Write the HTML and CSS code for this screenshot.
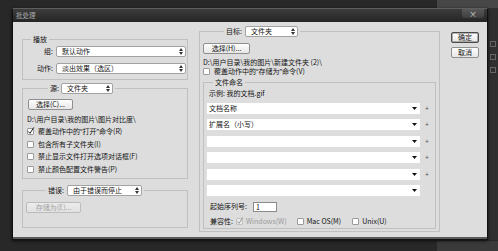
FILE: index.html
```html
<!DOCTYPE html>
<html lang="zh-CN">
<head>
<meta charset="utf-8">
<title>批处理</title>
<link rel="stylesheet" href="styles.css">
</head>
<body>
<div class="screen">
  <div class="patch patch-top"></div>
  <div class="patch patch-bottom"></div>
  <div class="dialog">
    <div class="titlebar">
      <span class="title">批处理</span>
      <span class="close">×</span>
    </div>
    <div class="content">
      <div class="col-left">
        <fieldset class="box box-play">
          <legend class="legend-text">播放</legend>
          <div class="form-row">
            <span class="label">组:</span>
            <div class="select"><span>默认动作</span><svg class="updown" width="4" height="7" viewBox="0 0 4 7"><path d="M0 3L2 0L4 3Z M0 4L2 7L4 4Z"/></svg></div>
          </div>
          <div class="form-row">
            <span class="label">动作:</span>
            <div class="select"><span>淡出效果（选区）</span><svg class="updown" width="4" height="7" viewBox="0 0 4 7"><path d="M0 3L2 0L4 3Z M0 4L2 7L4 4Z"/></svg></div>
          </div>
        </fieldset>

        <fieldset class="box box-src">
          <legend class="legend-ctrl"><span class="legend-label label-src">源:</span><div class="select select-src"><span>文件夹</span><svg class="updown" width="4" height="7" viewBox="0 0 4 7"><path d="M0 3L2 0L4 3Z M0 4L2 7L4 4Z"/></svg></div></legend>
          <div class="btn btn-c">选择(C)...</div>
          <div class="path path-left">D:\用户目录\我的图片\图片对比度\</div>
          <div class="check-row"><span class="checkbox"><svg width="7" height="7" viewBox="0 0 7 7"><path d="M1.2 3.4L3 5.4L6.8 -0.6" fill="none" stroke="#222" stroke-width="1"/></svg></span>覆盖动作中的<span class="q">“</span>打开<span class="q">”</span>命令(R)</div>
          <div class="check-row"><span class="checkbox"></span>包含所有子文件夹(I)</div>
          <div class="check-row"><span class="checkbox"></span>禁止显示文件打开选项对话框(F)</div>
          <div class="check-row"><span class="checkbox"></span>禁止颜色配置文件警告(P)</div>
        </fieldset>

        <fieldset class="box box-err">
          <legend class="legend-ctrl"><span class="legend-label">错误:</span><div class="select select-err"><span>由于错误而停止</span><svg class="updown" width="4" height="7" viewBox="0 0 4 7"><path d="M0 3L2 0L4 3Z M0 4L2 7L4 4Z"/></svg></div></legend>
          <div class="btn btn-disabled">存储为(E)...</div>
        </fieldset>
      </div>

      <fieldset class="box box-dest">
        <legend class="legend-ctrl"><span class="legend-label">目标:</span><div class="select select-dest"><span>文件夹</span><svg class="updown" width="4" height="7" viewBox="0 0 4 7"><path d="M0 3L2 0L4 3Z M0 4L2 7L4 4Z"/></svg></div></legend>
        <div class="btn btn-h">选择(H)...</div>
        <div class="path path-dest">D:\用户目录\我的图片\新建文件夹 (2)\</div>
        <div class="check-row check-row-dest"><span class="checkbox"></span>覆盖动作中的<span class="q">“</span>存储为<span class="q">”</span>命令(V)</div>

        <fieldset class="box box-naming">
          <legend class="legend-text">文件命名</legend>
          <div class="example">示例: 我的文档.gif</div>
          <div class="name-list">
            <div class="name-row"><div class="field"><span>文档名称</span><svg class="down" width="5" height="3" viewBox="0 0 5 3"><path d="M0 0H5L2.5 3Z"/></svg></div><span class="plus">+</span></div>
            <div class="name-row"><div class="field"><span>扩展名（小写）</span><svg class="down" width="5" height="3" viewBox="0 0 5 3"><path d="M0 0H5L2.5 3Z"/></svg></div><span class="plus">+</span></div>
            <div class="name-row"><div class="field"><span></span><svg class="down" width="5" height="3" viewBox="0 0 5 3"><path d="M0 0H5L2.5 3Z"/></svg></div><span class="plus">+</span></div>
            <div class="name-row"><div class="field"><span></span><svg class="down" width="5" height="3" viewBox="0 0 5 3"><path d="M0 0H5L2.5 3Z"/></svg></div><span class="plus">+</span></div>
            <div class="name-row"><div class="field"><span></span><svg class="down" width="5" height="3" viewBox="0 0 5 3"><path d="M0 0H5L2.5 3Z"/></svg></div><span class="plus">+</span></div>
            <div class="name-row"><div class="field"><span></span><svg class="down" width="5" height="3" viewBox="0 0 5 3"><path d="M0 0H5L2.5 3Z"/></svg></div></div>
          </div>
          <div class="seq-row"><span>起始序列号:</span><div class="seq-input">1</div></div>
          <div class="compat-row">
            <span>兼容性:</span>
            <span class="checkbox checkbox-disabled cb-win"><svg width="7" height="7" viewBox="0 0 7 7"><path d="M1.2 3.4L3 5.4L6.8 -0.6" fill="none" stroke="#9a9a9a" stroke-width="1"/></svg></span><span class="disabled-text">Windows(W)</span>
            <span class="checkbox cb-mac"></span><span>Mac OS(M)</span>
            <span class="checkbox cb-unix"></span><span>Unix(U)</span>
          </div>
        </fieldset>
      </fieldset>

      <div class="col-buttons">
        <div class="btn btn-default">确定</div>
        <div class="btn">取消</div>
      </div>
    </div>
  </div>
  <div class="side-panel">
    <span class="side-icon"></span>
    <span class="side-icon"></span>
    <span class="side-icon"></span>
  </div>
</div>
</body>
</html>
```

FILE: styles.css
```css
* { box-sizing: border-box; }
html, body { margin: 0; padding: 0; }
body {
  width: 498px;
  height: 251px;
  overflow: hidden;
  background: #282828;
  font-family: "Noto Sans CJK SC", "Noto Sans", sans-serif;
  font-size: 7px;
  line-height: 9px;
  color: #141414;
}
.screen {
  position: relative;
  width: 498px;
  height: 251px;
  display: flex;
  align-items: flex-start;
}
.patch { position: absolute; left: 437px; width: 61px; }
.patch-top { top: 0; height: 8px; background: #474747; }
.patch-bottom { top: 241px; height: 10px; background: #3a3a3a; }

.dialog {
  position: relative;
  z-index: 1;
  flex: none;
  margin: 8px 0 0 12px;
  width: 476px;
  height: 232px;
  border: 1px solid #101010;
  border-top-color: #5e5e5e;
  display: flex;
  flex-direction: column;
  box-shadow: 0 1px 3px rgba(0, 0, 0, 0.7);
}
.titlebar {
  flex: none;
  height: 13px;
  display: flex;
  justify-content: space-between;
  align-items: flex-start;
  padding: 0 3px 0 3px;
  background: linear-gradient(#3c3c3c, #252525);
}
.title { color: #a9a9a9; font-size: 6.5px; line-height: 13px; }
.close {
  width: 22px;
  height: 9px;
  border-radius: 0 0 3px 3px;
  background: linear-gradient(#585858, #3e3e3e);
  color: #d8d8d8;
  font-size: 8px;
  line-height: 9px;
  text-align: center;
}
.content {
  flex: 1;
  display: flex;
  align-items: flex-start;
  padding-left: 9px;
  background: #dddddd;
  border-bottom: 2px solid #5a5a5a;
}

.col-left { width: 166px; flex: none; display: flex; flex-direction: column; }

.box { margin: 0; min-width: 0; border: 1px solid #c0c0c0; }
.box > legend { padding: 0 2px; }
.legend-text { height: 9px; line-height: 9px; }
.legend-ctrl { height: 11px; display: flex; align-items: center; }
.legend-label { margin-right: 3px; white-space: nowrap; }
.label-src { margin-right: 2px; }
.q { font-family: "Noto Sans", sans-serif; }

.box-play { margin-top: 13px; padding: 2px 1px 5px 3px; }
.box-play > legend { margin-left: 5px; }
.form-row {
  display: grid;
  grid-template-columns: 27px 130px;
  column-gap: 3px;
  align-items: center;
}
.form-row + .form-row { margin-top: 6px; }
.label { text-align: right; white-space: nowrap; }

.select {
  height: 11px;
  background: #fff;
  border: 1px solid #a2a2a2;
  border-radius: 2px;
  display: flex;
  align-items: center;
  justify-content: space-between;
  padding: 0 2px 0 5px;
  white-space: nowrap;
}
.updown { fill: #333; flex: none; display: block; }
.down { fill: #111; flex: none; display: block; }

.box-src { margin-top: 3px; padding: 5px 1px 2.5px 3px; }
.box-src > legend { margin-left: 22px; }
.select-src { width: 52px; }

.btn {
  height: 11px;
  border: 1px solid #8f8f8f;
  border-radius: 2px;
  background: linear-gradient(#fefefe, #e6e6e6);
  display: flex;
  align-items: center;
  justify-content: center;
  white-space: nowrap;
}
.btn-c { width: 45px; margin-left: 2px; }
.path { white-space: nowrap; }
.path-left { margin-top: 3px; line-height: 12.5px; margin-left: 1px; }
.check-row {
  display: flex;
  align-items: center;
  height: 12.5px;
  white-space: nowrap;
  padding-left: 1px;
}
.checkbox {
  flex: none;
  width: 7px;
  height: 7px;
  border: 1px solid #9a9a9a;
  border-radius: 1px;
  background: #fff;
  margin-right: 4px;
}
.checkbox svg { display: block; overflow: visible; margin: -1px 0 0 -1px; }

.box-err { margin-top: 6px; padding: 6px 1px 14px 3px; }
.box-err > legend { margin-left: 20px; }
.select-err { width: 75px; }
.btn-disabled {
  width: 55px;
  color: #a2a2a2;
  border-color: #bcbcbc;
  background: linear-gradient(#ececec, #e2e2e2);
}

.box-dest {
  width: 241px;
  flex: none;
  margin: 4px 0 0 11px;
  padding: 6px 3px 2px 3px;
}
.box-dest > legend { margin-left: 21px; }
.select-dest { width: 53px; }
.btn-h { width: 47px; }
.path-dest { margin-top: 3.5px; line-height: 9px; }
.check-row-dest { height: 9px; padding-left: 0; }

.box-naming { margin-top: 2px; padding: 2px 1px 1px 3px; }
.box-naming > legend { margin-left: 6px; }
.example { padding-left: 2px; line-height: 9px; }
.name-list { margin-top: 5.5px; display: flex; flex-direction: column; gap: 5.4px; }
.name-row { display: flex; align-items: center; height: 11px; }
.field {
  width: 213px;
  height: 11px;
  background: #fff;
  display: flex;
  align-items: center;
  justify-content: space-between;
  padding: 0 3px 0 2px;
  white-space: nowrap;
}
.plus { width: 14px; text-align: center; color: #555; font-size: 7px; line-height: 9px; }

.seq-row { margin-top: 6px; height: 10px; display: flex; align-items: center; padding-left: 3px; white-space: nowrap; }
.seq-input {
  width: 24px;
  height: 10px;
  margin-left: 6px;
  background: #fff;
  border: 1px solid #8a8a8a;
  padding-left: 2px;
  line-height: 8px;
}
.compat-row { margin-top: 5px; height: 10px; display: flex; align-items: center; padding-left: 3px; white-space: nowrap; }
.compat-row .checkbox { margin-right: 3px; }
.cb-win { margin-left: 3px; }
.cb-mac { margin-left: 10px; }
.cb-unix { margin-left: 11px; }
.checkbox-disabled { border-color: #c2c2c2; background: #ebebeb; }
.disabled-text { color: #9c9c9c; }

.col-buttons {
  width: 28px;
  flex: none;
  margin: 10px 0 0 11px;
  display: flex;
  flex-direction: column;
  gap: 4px;
}
.btn-default { border-color: #4a4a4a; box-shadow: inset 0 0 0 0.5px #6a6a6a; }

.side-panel {
  flex: none;
  width: 10px;
  height: 232px;
  margin-top: 8px;
  background: #2f2f2f;
  display: flex;
  flex-direction: column;
  align-items: center;
  padding-top: 33px;
  gap: 7px;
}
.side-icon { width: 6px; height: 6px; border: 1px solid #666; }
```
